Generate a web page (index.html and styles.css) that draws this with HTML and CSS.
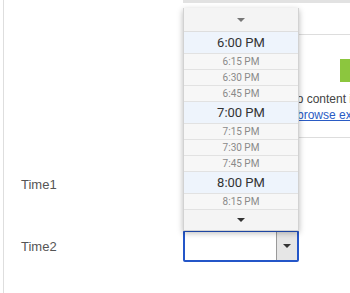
FILE: index.html
```html
<!DOCTYPE html>
<html lang="en">
<head>
  <meta charset="UTF-8">
  <title>Time picker</title>
  <link rel="stylesheet" href="styles.css">
</head>
<body>
  <div class="page">
    <div class="strip"></div>

    <div class="panel">
      <div class="go"></div>
      <p class="empty">No content in this view</p>
      <p class="empty link-line"><a href="#">browse examples</a></p>
    </div>

    <div class="field-row first">
      <label class="label">Time1</label>
      <div class="select">
        <span class="value"></span>
        <span class="btn"><span class="tri"></span></span>
      </div>
    </div>

    <div class="field-row">
      <label class="label">Time2</label>
      <div class="select focused">
        <span class="value"></span>
        <span class="btn"><span class="tri"></span></span>
      </div>
    </div>

    <div class="popup">
      <div class="pop-head"><span class="tri light"></span></div>
      <div class="opt hour">6:00 PM</div>
      <div class="opt">6:15 PM</div>
      <div class="opt">6:30 PM</div>
      <div class="opt">6:45 PM</div>
      <div class="opt hour">7:00 PM</div>
      <div class="opt">7:15 PM</div>
      <div class="opt">7:30 PM</div>
      <div class="opt">7:45 PM</div>
      <div class="opt hour">8:00 PM</div>
      <div class="opt">8:15 PM</div>
      <div class="pop-foot"><span class="tri"></span></div>
    </div>
  </div>
</body>
</html>
```

FILE: styles.css
```css
html, body {
  margin: 0;
  padding: 0;
  background: #fff;
}
body {
  width: 350px;
  height: 293px;
  overflow: hidden;
  font-family: "Liberation Sans", Arial, sans-serif;
}
.page {
  position: relative;
  height: 293px;
  margin-left: 3px;
  border-left: 1px solid #dedede;
}
.strip {
  margin-left: 179px;
  height: 3px;
  background: #e2e2e2;
}
.panel {
  margin: 31px 0 0 293px;
  height: 102px;
  border-top: 1px solid #dddddd;
  border-bottom: 1px solid #dddddd;
}
.go {
  margin: 24px 0 0 43px;
  width: 30px;
  height: 23px;
  background: #8cc63e;
}
.empty {
  margin: 0;
  font-size: 12px;
  line-height: 16px;
  color: #444;
  white-space: nowrap;
}
.empty:first-of-type {
  margin-top: 9px;
  margin-left: -9px;
}
.link-line a {
  color: #2a5bc4;
  text-decoration: underline;
}
.field-row {
  display: grid;
  grid-template-columns: 179px 116px;
  align-items: center;
  height: 32px;
  margin-top: 30px;
}
.label {
  padding-left: 17px;
  font-size: 13px;
  color: #555;
}
.select {
  display: flex;
  height: 32px;
  box-sizing: border-box;
  border: 1px solid #bbb;
  border-radius: 2px;
  background: #fff;
}
.select.focused {
  border: 2px solid #2456c8;
}
.value {
  flex: 1;
}
.btn {
  width: 20px;
  display: flex;
  align-items: center;
  justify-content: center;
  background: #e6e6e6;
  border-left: 1px solid #9a9a9a;
}
.tri {
  display: inline-block;
  width: 0;
  height: 0;
  border-left: 4px solid transparent;
  border-right: 4px solid transparent;
  border-top: 4px solid #333;
}
.tri.light {
  border-top-color: #777;
}
.popup {
  position: absolute;
  left: 179px;
  top: 8px;
  width: 116px;
  box-sizing: border-box;
  border: 1px solid #d2d2d2;
  border-top: none;
  background: #f6f6f6;
  box-shadow: 0 2px 6px rgba(0, 0, 0, 0.28);
  font-family: Roboto, "Liberation Sans", sans-serif;
}
.pop-head,
.pop-foot {
  display: flex;
  align-items: center;
  justify-content: center;
  background: #f4f4f4;
  box-sizing: border-box;
}
.pop-head {
  height: 24px;
  border-bottom: 1px solid #dedede;
}
.pop-foot {
  height: 20px;
}
.opt {
  height: 16px;
  box-sizing: border-box;
  border-bottom: 1px solid #e2e2e2;
  background: #f7f7f7;
  color: #8a8a8a;
  font-size: 10px;
  line-height: 15px;
  text-align: center;
}
.opt.hour {
  height: 22px;
  line-height: 21px;
  font-size: 13px;
  color: #333;
  background: #eef4fc;
}
```
